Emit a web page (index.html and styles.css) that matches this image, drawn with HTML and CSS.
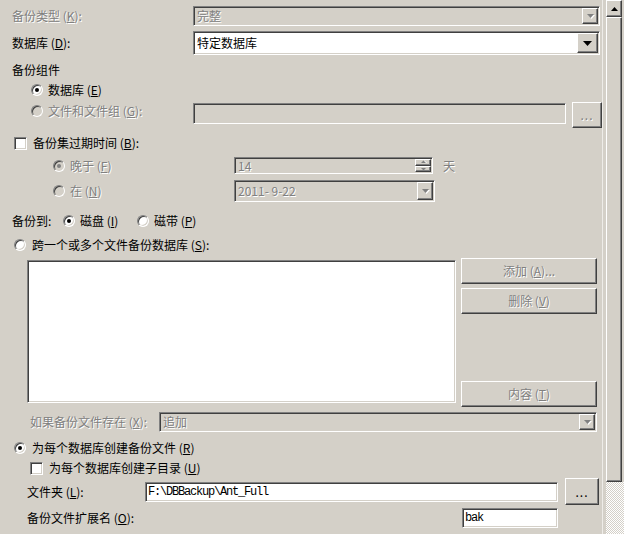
FILE: index.html
```html
<!DOCTYPE html>
<html lang="zh-CN">
<head>
<meta charset="utf-8">
<title>备份数据库</title>
<link rel="stylesheet" href="styles.css">
</head>
<body>
<div class="window">
  <div class="content">
    <div class="row row-type">
      <span class="lbl lbl-main dis">备份类型 (<u>K</u>):</span>
      <div class="combo sunken is-dis combo-main c1">
        <span class="val dis">完整</span>
        <span class="btn dd dd-16"><svg class="arr" width="9" height="6" viewBox="0 0 9 6"><path class="sh" d="M2 2h7L5.5 6z"/><path class="g" d="M1 1h7L4.5 5z"/></svg></span>
      </div>
    </div>

    <div class="row row-db">
      <span class="lbl lbl-main">数据库 (<u>D</u>):</span>
      <div class="combo sunken combo-main c2">
        <span class="val">特定数据库</span>
        <span class="btn dd dd-21"><svg width="9" height="5" viewBox="0 0 9 5"><path d="M0 0h9L4.5 5z"/></svg></span>
      </div>
    </div>

    <div class="row row-grp"><span class="lbl">备份组件</span></div>

    <div class="row row-r1">
      <span class="rb on"></span><span class="lbl rlbl">数据库 (<u>E</u>)</span>
    </div>

    <div class="row row-files">
      <div class="optcell">
        <span class="rb dis-rb"></span><span class="lbl rlbl dis">文件和文件组 (<u>G</u>):</span>
      </div>
      <div class="sunken is-dis tb-files"></div>
      <span class="btn btn-dots dis">...</span>
    </div>

    <div class="row row-exp">
      <span class="cb"></span><span class="lbl cblbl">备份集过期时间 (<u>B</u>):</span>
    </div>

    <div class="row row-after">
      <div class="optcell2">
        <span class="rb dis-rb on-dis"></span><span class="lbl rlbl2 dis">晚于 (<u>F</u>)</span>
      </div>
      <div class="sunken is-dis spin">
        <span class="val dis">14</span>
        <span class="spinbtns">
          <span class="btn sbtn"><svg width="7" height="4" viewBox="0 0 7 4"><path class="sh" d="M2 3h5L4.5 0.5z"/><path class="g" d="M1 3h5L3.5 0.5z"/></svg></span>
          <span class="btn sbtn"><svg width="7" height="4" viewBox="0 0 7 4"><path class="g" d="M1 1h5L3.5 3.5z"/></svg></span>
        </span>
      </div>
      <span class="lbl dis day">天</span>
    </div>

    <div class="row row-on">
      <div class="optcell2">
        <span class="rb dis-rb"></span><span class="lbl rlbl2 dis">在 (<u>N</u>)</span>
      </div>
      <div class="combo sunken is-dis combo-date">
        <span class="val dis">2011- 9-22</span>
        <span class="btn dd dd-16"><svg class="arr" width="9" height="6" viewBox="0 0 9 6"><path class="sh" d="M2 2h7L5.5 6z"/><path class="g" d="M1 1h7L4.5 5z"/></svg></span>
      </div>
    </div>

    <div class="row row-to">
      <span class="lbl to-lbl">备份到:</span>
      <span class="rb on"></span><span class="lbl rlbl to-opt">磁盘 (<u>I</u>)</span>
      <span class="rb"></span><span class="lbl rlbl">磁带 (<u>P</u>)</span>
    </div>

    <div class="row row-span">
      <span class="rb"></span><span class="lbl cblbl">跨一个或多个文件备份数据库 (<u>S</u>):</span>
    </div>

    <div class="row row-list">
      <div class="sunken listbox"></div>
      <div class="btncol">
        <span class="btn wbtn dis">添加 (<u>A</u>)...</span>
        <span class="btn wbtn dis">删除 (<u>V</u>)</span>
        <span class="btn wbtn dis last">内容 (<u>T</u>)</span>
      </div>
    </div>

    <div class="row row-exist">
      <span class="lbl dis exist-lbl">如果备份文件存在 (<u>X</u>):</span>
      <div class="combo sunken is-dis combo-exist">
        <span class="val dis">追加</span>
        <span class="btn dd dd-small"><svg class="arr" width="9" height="6" viewBox="0 0 9 6"><path class="sh" d="M2 2h7L5.5 6z"/><path class="g" d="M1 1h7L4.5 5z"/></svg></span>
      </div>
    </div>

    <div class="row row-each">
      <span class="rb on"></span><span class="lbl cblbl">为每个数据库创建备份文件 (<u>R</u>)</span>
    </div>

    <div class="row row-sub">
      <span class="cb"></span><span class="lbl sublbl">为每个数据库创建子目录 (<u>U</u>)</span>
    </div>

    <div class="row row-folder">
      <span class="lbl folder-lbl">文件夹 (<u>L</u>):</span>
      <div class="sunken tb-folder"><span class="mono">F:\DBBackup\Ant_Full</span></div>
      <span class="btn btn-dots2">...</span>
    </div>

    <div class="row row-ext">
      <span class="lbl ext-lbl">备份文件扩展名 (<u>O</u>):</span>
      <div class="sunken tb-ext"><span class="mono">bak</span></div>
    </div>
  </div>

  <div class="vscroll">
    <span class="btn sb-up"><svg width="7" height="4" viewBox="0 0 7 4"><path d="M0 4h7L3.5 0z"/></svg></span>
    <span class="btn sb-thumb"></span>
    <span class="sb-track"></span>
  </div>
</div>
</body>
</html>
```

FILE: styles.css
```css
* { box-sizing: border-box; }
html, body { margin: 0; padding: 0; }
body {
  width: 624px;
  height: 534px;
  overflow: hidden;
  background: #d4d0c8;
  font-family: "Noto Sans CJK SC", "Liberation Sans", sans-serif;
  font-size: 12px;
  line-height: 14px;
  color: #000;
}
.window { display: flex; height: 534px; }
.content {
  width: 603px;
  height: 534px;
  overflow: hidden;
  border-right: 1px solid #eeece8;
  margin-right: 3px;
  flex: none;
}
.row { display: flex; align-items: center; flex: none; }
.lbl { white-space: nowrap; height: 14px; display: inline-block; flex: none; }
.dis { color: #808080; text-shadow: 1px 1px 0 #fff; }
u { text-decoration: underline; }

/* bevels */
.sunken {
  border: 1px solid;
  border-color: #808080 #fff #fff #808080;
  box-shadow: inset 1px 1px #404040, inset -1px -1px #d4d0c8;
  background: #fff;
  padding: 1px;
}
.sunken.is-dis { background: #d4d0c8; }
.btn {
  border: 1px solid;
  border-color: #fff #404040 #404040 #fff;
  box-shadow: inset -1px -1px #808080, inset 1px 1px #d4d0c8;
  background: #d4d0c8;
  display: flex;
  align-items: center;
  justify-content: center;
  flex: none;
}
svg path { fill: #000; }
svg .g { fill: #808080; }
svg .sh { fill: #fff; }

/* combos */
.combo { display: flex; align-items: center; }
.combo .val { flex: 1; padding-left: 2px; white-space: nowrap; }
.dd { height: 100%; }
.dd-16 { width: 16px; }
.dd-21 { width: 21px; }
.dd-small { width: 16px; }
.combo-main { width: 407px; }
.c1 { height: 20px; }
.c2 { height: 24px; }
.lbl-main { width: 181px; }

/* radio & checkbox */
.rb {
  width: 12px; height: 12px;
  border-radius: 50%;
  border: 1px solid;
  border-color: #808080 #fff #fff #808080;
  box-shadow: inset 1px 1px #404040, inset -1px -1px #d4d0c8;
  background: #fff;
  position: relative;
  flex: none;
}
.rb.dis-rb { background: #d4d0c8; }
.rb.on::after, .rb.on-dis::after {
  content: "";
  position: absolute;
  left: 3px; top: 3px;
  width: 4px; height: 4px;
  border-radius: 50%;
  background: #000;
}
.rb.on-dis::after { background: #808080; }
.cb {
  width: 13px; height: 13px;
  border: 1px solid;
  border-color: #808080 #fff #fff #808080;
  box-shadow: inset 1px 1px #404040, inset -1px -1px #d4d0c8;
  background: #fff;
  flex: none;
}
.rlbl { margin-left: 5px; }
.cblbl { margin-left: 6px; }

/* rows */
.row-type { margin-top: 5px; height: 21px; padding-left: 12px; }
.row-db { margin-top: 5px; height: 24px; padding-left: 12px; }
.row-grp { margin-top: 8px; height: 14px; padding-left: 12px; }
.row-r1 { margin-top: 6px; height: 14px; padding-left: 31px; }

.row-files { margin-top: 5px; height: 26px; padding-left: 31px; align-items: flex-start; }
.optcell { width: 162px; display: flex; align-items: center; margin-top: 2px; flex: none; }
.tb-files { width: 373px; height: 21px; margin-top: 1px; }
.btn-dots { width: 30px; height: 26px; margin-left: 6px; letter-spacing: 1px; }

.row-exp { margin-top: 8px; height: 14px; padding-left: 14px; }

.row-after { margin-top: 7px; height: 17px; padding-left: 53px; }
.optcell2 { width: 181px; display: flex; align-items: center; flex: none; }
.rlbl2 { margin-left: 5px; }
.spin { width: 199px; height: 17px; display: flex; align-items: center; }
.spin .val { flex: 1; padding-left: 2px; }
.spinbtns { display: flex; flex-direction: column; width: 16px; height: 100%; }
.sbtn { flex: 1; }
.day { margin-left: 10px; }

.row-on { margin-top: 6px; height: 22px; padding-left: 53px; }
.combo-date { width: 201px; height: 22px; }

.row-to { margin-top: 12px; height: 14px; padding-left: 12px; }
.to-lbl { width: 51px; }
.to-opt { width: 57px; }

.row-span { margin-top: 10px; height: 14px; padding-left: 14px; }

.row-list { margin-top: 6px; height: 149px; padding-left: 27px; align-items: flex-start; }
.listbox { width: 429px; height: 143px; margin-top: 2px; }
.btncol { display: flex; flex-direction: column; width: 136px; height: 149px; margin-left: 5px; gap: 4px; }
.wbtn { height: 26px; }
.wbtn.last { margin-top: auto; }

.row-exist { margin-top: 5px; height: 20px; padding-left: 30px; }
.exist-lbl { width: 129px; }
.combo-exist { width: 438px; height: 20px; }

.row-each { margin-top: 9px; height: 14px; padding-left: 14px; }
.row-sub { margin-top: 6px; height: 14px; padding-left: 30px; }
.sublbl { margin-left: 6px; }

.row-folder { margin-top: 3px; height: 27px; padding-left: 27px; }
.folder-lbl { width: 118px; }
.tb-folder { width: 413px; height: 20px; display: flex; align-items: center; }
.btn-dots2 { width: 34px; height: 27px; margin-left: 7px; letter-spacing: 1px; }

.row-ext { margin-top: 3px; height: 20px; padding-left: 27px; }
.ext-lbl { width: 435px; }
.tb-ext { width: 96px; height: 20px; display: flex; align-items: center; }

.mono {
  font-family: "Liberation Mono", "DejaVu Sans Mono", monospace;
  font-size: 12px;
  letter-spacing: -1.2px;
  padding-left: 1px;
  white-space: nowrap;
}

/* scrollbar */
.vscroll {
  width: 18px;
  display: flex;
  flex-direction: column;
  flex: none;
}
.sb-up { width: 16px; height: 17px; }
.sb-thumb { width: 16px; height: 465px; }
.sb-track {
  flex: 1;
  background: repeating-conic-gradient(#fff 0 25%, #d4d0c8 0 50%) 0 0 / 2px 2px;
}
```
